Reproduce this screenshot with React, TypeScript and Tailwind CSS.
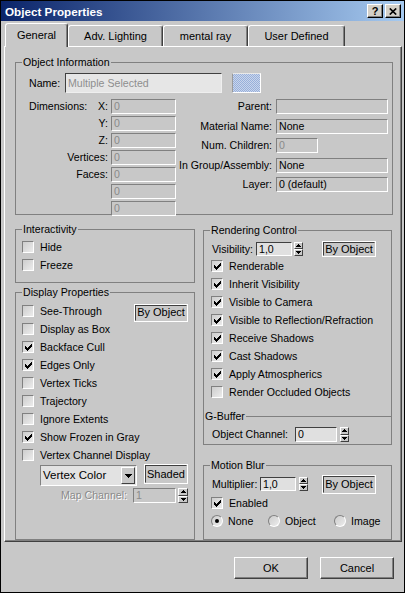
import React from "react";

type Tone = "off" | "plain" | "edit" | "name";

const tones: Record<Tone, string> = {
  off: "bg-[#c8c8c8] text-[#8a8a8a] border-t-[#808080] border-l-[#808080] border-b-white border-r-white",
  plain: "bg-[#c8c8c8] text-black border-t-[#808080] border-l-[#808080] border-b-white border-r-white",
  edit: "bg-[#e0e0e0] text-black border-t-[#404040] border-l-[#404040] border-b-white border-r-white",
  name: "bg-[#e6e6e6] text-[#8e8e8e] border-t-[#404040] border-l-[#404040] border-b-[#efefef] border-r-[#efefef]",
};

function Field({ size, value = "", tone = "off", className = "" }: { size: string; value?: string; tone?: Tone; className?: string }) {
  return (
    <div className={`flex shrink-0 items-center overflow-hidden whitespace-nowrap border pl-[2px] ${tones[tone]} ${size} ${className}`}>
      {value}
    </div>
  );
}

function CheckMark() {
  return (
    <svg width="7" height="7" viewBox="0 0 7 7" shapeRendering="crispEdges">
      <path d="M0 2h1v3H0zM1 3h1v3H1zM2 4h1v3H2zM3 3h1v3H3zM4 2h1v3H4zM5 1h1v3H5zM6 0h1v3H6z" fill="#000" />
    </svg>
  );
}

function Check({ checked }: { checked?: boolean }) {
  return (
    <span className="flex h-[12px] w-[12px] shrink-0 items-center justify-center border border-t-[#808080] border-l-[#808080] border-b-white border-r-white bg-[linear-gradient(135deg,#cdcdcd,#ececec)]">
      {checked && <CheckMark />}
    </span>
  );
}

function CheckRow({ label, checked }: { label: string; checked?: boolean }) {
  return (
    <div className="flex h-[18px] items-center whitespace-nowrap">
      <Check checked={checked} />
      <span className="ml-[6px]">{label}</span>
    </div>
  );
}

function Radio({ on }: { on?: boolean }) {
  return (
    <span className="flex h-[12px] w-[12px] shrink-0 items-center justify-center rounded-full border border-t-[#808080] border-l-[#808080] border-b-white border-r-white bg-[linear-gradient(135deg,#cdcdcd,#ececec)]">
      {on && <span className="h-[4px] w-[4px] rounded-full bg-black" />}
    </span>
  );
}

function Spinner({ size, className = "" }: { size: string; className?: string }) {
  const half =
    "flex flex-1 items-center justify-center border border-t-white border-l-white border-b-[#404040] border-r-[#404040] bg-[#c8c8c8]";
  return (
    <div className={`flex shrink-0 flex-col ${size} ${className}`}>
      <div className={half}>
        <svg width="5" height="3" viewBox="0 0 5 3" shapeRendering="crispEdges">
          <path d="M2 0h1v1h1v1h1v1H0V2h1V1h1z" fill="#000" />
        </svg>
      </div>
      <div className={half}>
        <svg width="5" height="3" viewBox="0 0 5 3" shapeRendering="crispEdges">
          <path d="M0 0h5v1H4v1H3v1H2V2H1V1H0z" fill="#000" />
        </svg>
      </div>
    </div>
  );
}

function ToggleButton({ label, size, className = "" }: { label: string; size: string; className?: string }) {
  return (
    <div className={`flex shrink-0 border border-white ${size} ${className}`}>
      <div className="flex flex-1 items-center justify-center whitespace-nowrap border border-t-[#404040] border-l-[#404040] border-b-[#c8c8c8] border-r-[#c8c8c8] text-[11px]">
        {label}
      </div>
    </div>
  );
}

function PushButton({ label }: { label: string }) {
  return (
    <div className="flex h-[22px] w-[74px] items-center justify-center border border-t-white border-l-white border-b-[#404040] border-r-[#404040] text-[11px] shadow-[inset_-1px_-1px_0_#808080]">
      {label}
    </div>
  );
}

function Group({ label, className = "", children }: { label: string; className?: string; children?: React.ReactNode }) {
  return (
    <div className={`relative shrink-0 border border-[#808080] ${className}`}>
      <span className="absolute left-[6px] top-[-7px] whitespace-nowrap bg-[#c8c8c8] px-[1px] leading-[13px]">{label}</span>
      {children}
    </div>
  );
}

function TitleButton({ children, className = "" }: { children: React.ReactNode; className?: string }) {
  return (
    <div
      className={`flex h-[14px] w-[16px] items-center justify-center border border-t-white border-l-white border-b-black border-r-black bg-[#d4d0c8] shadow-[inset_-1px_-1px_0_#808080] ${className}`}
    >
      {children}
    </div>
  );
}

function Tab({ label, size, active }: { label: string; size: string; active?: boolean }) {
  return (
    <div
      className={`flex shrink-0 items-center justify-center whitespace-nowrap rounded-t-[3px] border-l border-r border-t border-l-white border-t-white border-r-[#404040] bg-[#c8c8c8] text-[11px] shadow-[inset_-1px_0_0_#808080] ${size} ${
        active ? "relative z-10 -mb-[1px]" : ""
      }`}
    >
      {label}
    </div>
  );
}

const dimRows: [string, string][] = [
  ["Dimensions:", "X:"],
  ["", "Y:"],
  ["", "Z:"],
  ["", "Vertices:"],
  ["", "Faces:"],
  ["", ""],
  ["", ""],
];

export default function App() {
  return (
    <div className="flex h-[593px] w-[405px] select-none flex-col border border-black bg-[#c8c8c8] font-['Liberation_Sans',Arial,sans-serif] text-[10.6px] leading-[13px] text-black">
      {/* caption */}
      <div className="flex h-[20px] shrink-0 items-center bg-[linear-gradient(to_right,#0a246a,#a6caf0)] pl-[4px] pr-[3px]">
        <span className="flex-1 text-[11.7px] font-bold text-white">Object Properties</span>
        <TitleButton>
          <span className="text-[11px] font-bold leading-none">?</span>
        </TitleButton>
        <TitleButton className="ml-[2px]">
          <svg width="8" height="7" viewBox="0 0 8 7">
            <path d="M0.8 0.5L7.2 6.5M7.2 0.5L0.8 6.5" stroke="#000" strokeWidth="1.7" />
          </svg>
        </TitleButton>
      </div>

      {/* tab strip */}
      <div className="flex h-[25px] shrink-0 items-end pl-[4px]">
        <Tab label="General" size="h-[24px] w-[63px]" active />
        <Tab label="Adv. Lighting" size="h-[21px] w-[95px]" />
        <Tab label="mental ray" size="h-[21px] w-[85px]" />
        <Tab label="User Defined" size="h-[21px] w-[97px]" />
      </div>

      {/* tab page */}
      <div className="ml-[3px] h-[496px] w-[398px] shrink-0 border border-t-white border-l-white border-b-[#404040] border-r-[#404040] pl-[10px] pt-[15px] shadow-[inset_-1px_-1px_0_#808080]">
        <Group label="Object Information" className="h-[153px] w-[378px]">
          <div className="pl-[13px] pt-[10px]">
            <div className="flex h-[20px] items-center">
              <span className="w-[36px]">Name:</span>
              <Field size="h-[20px] w-[157px]" tone="name" value="Multiple Selected" />
              <div className="ml-[10px] h-[20px] w-[29px] border border-white border-l-[#9a9a9a] border-t-[#e8e8e8] bg-[image:repeating-conic-gradient(#98b0da_0_25%,#c9d5ec_0_50%)] bg-[length:2px_2px]" />
            </div>
            <div className="mt-[6px] flex">
              <div className="flex flex-col gap-[2px]">
                {dimRows.map(([a, b], i) => (
                  <div key={i} className="flex h-[15px] items-center">
                    <span className="flex w-[79px] justify-between whitespace-nowrap">
                      <span>{a}</span>
                      <span>{b}</span>
                    </span>
                    <Field size="h-[15px] w-[65px]" value="0" className="ml-[3px]" />
                  </div>
                ))}
              </div>
              <div className="flex flex-col gap-[4.5px]">
                <div className="flex h-[15px] items-center">
                  <span className="w-[96px] whitespace-nowrap text-right">Parent:</span>
                  <Field size="h-[15px] w-[112px]" tone="plain" className="ml-[4px]" />
                </div>
                <div className="flex h-[15px] items-center">
                  <span className="w-[96px] whitespace-nowrap text-right">Material Name:</span>
                  <Field size="h-[15px] w-[112px]" tone="plain" value="None" className="ml-[4px]" />
                </div>
                <div className="flex h-[15px] items-center">
                  <span className="w-[96px] whitespace-nowrap text-right">Num. Children:</span>
                  <Field size="h-[15px] w-[42px]" value="0" className="ml-[4px]" />
                </div>
                <div className="flex h-[15px] items-center">
                  <span className="flex w-[96px] justify-end whitespace-nowrap">In Group/Assembly:</span>
                  <Field size="h-[15px] w-[112px]" tone="plain" value="None" className="ml-[4px]" />
                </div>
                <div className="flex h-[15px] items-center">
                  <span className="w-[96px] whitespace-nowrap text-right">Layer:</span>
                  <Field size="h-[15px] w-[112px]" tone="plain" value="0 (default)" className="ml-[4px]" />
                </div>
              </div>
            </div>
          </div>
        </Group>

        <div className="mt-[14px] flex gap-[8px]">
          {/* left column */}
          <div className="flex flex-col gap-[9px]">
            <Group label="Interactivity" className="h-[54px] w-[180px]">
              <div className="pl-[6px] pt-[8px]">
                <CheckRow label="Hide" />
                <CheckRow label="Freeze" />
              </div>
            </Group>
            <Group label="Display Properties" className="h-[248px] w-[180px]">
              <div className="pl-[6px] pr-[6px] pt-[9px]">
                <div className="flex h-[18px] items-center justify-between">
                  <div className="flex items-center">
                    <Check />
                    <span className="ml-[6px]">See-Through</span>
                  </div>
                  <ToggleButton label="By Object" size="mt-[3px] h-[18px] w-[54px]" />
                </div>
                <CheckRow label="Display as Box" />
                <CheckRow label="Backface Cull" checked />
                <CheckRow label="Edges Only" checked />
                <CheckRow label="Vertex Ticks" />
                <CheckRow label="Trajectory" />
                <CheckRow label="Ignore Extents" />
                <CheckRow label="Show Frozen in Gray" checked />
                <CheckRow label="Vertex Channel Display" />
                <div className="ml-[18px] flex h-[22px] items-start">
                  <div className="mt-[1px] flex h-[21px] w-[97px] items-center border border-t-[#808080] border-l-[#808080] border-b-white border-r-white bg-[#e2e2e2]">
                    <span className="flex-1 whitespace-nowrap pl-[2px] text-[11.5px]">Vertex Color</span>
                    <span className="mr-[1px] flex h-[17px] w-[14px] items-center justify-center border border-t-white border-l-white border-b-[#404040] border-r-[#404040] bg-[#c8c8c8]">
                      <svg width="7" height="4" viewBox="0 0 7 4" shapeRendering="crispEdges">
                        <path d="M0 0h7v1H6v1H5v1H4v1H3V3H2V2H1V1H0z" fill="#000" />
                      </svg>
                    </span>
                  </div>
                  <ToggleButton label="Shaded" size="ml-[7px] h-[20px] w-[44px]" />
                </div>
                <div className="ml-[39px] mt-[2px] flex h-[15px] items-center">
                  <span className="w-[66px] whitespace-nowrap text-right text-[#8a8a8a] [text-shadow:1px_1px_0_#ffffff]">Map Channel:</span>
                  <Field size="h-[15px] w-[43px]" value="1" tone="off" className="ml-[6px] border-t-[#404040] border-l-[#404040]" />
                  <Spinner size="h-[15px] w-[10px]" className="ml-[2px]" />
                </div>
              </div>
            </Group>
          </div>

          {/* right column */}
          <div className="flex flex-col gap-[20px] pt-[1px]">
            <Group label="Rendering Control" className="h-[215px] w-[189px]">
              <div className="pl-[7px] pt-[10px]">
                <div className="flex h-[16px] items-center">
                  <span className="ml-[1px] w-[44px]">Visibility:</span>
                  <Field size="h-[14px] w-[36px]" tone="edit" value="1,0" />
                  <Spinner size="h-[14px] w-[9px]" className="ml-[2px]" />
                  <ToggleButton label="By Object" size="ml-[19px] h-[16px] w-[54px]" />
                </div>
                <CheckRow label="Renderable" checked />
                <CheckRow label="Inherit Visibility" checked />
                <CheckRow label="Visible to Camera" checked />
                <CheckRow label="Visible to Reflection/Refraction" checked />
                <CheckRow label="Receive Shadows" checked />
                <CheckRow label="Cast Shadows" checked />
                <CheckRow label="Apply Atmospherics" checked />
                <CheckRow label="Render Occluded Objects" />
              </div>
              <div className="relative mt-[15px] border-t border-[#808080]">
                <span className="absolute left-[0px] top-[-7px] bg-[#c8c8c8] px-[1px] leading-[13px]">G-Buffer</span>
                <div className="mt-[10px] flex h-[15px] items-center pl-[8px]">
                  <span className="w-[83px] whitespace-nowrap">Object Channel:</span>
                  <Field size="h-[15px] w-[42px]" tone="edit" value="0" />
                  <Spinner size="h-[15px] w-[9px]" className="ml-[3px]" />
                </div>
              </div>
            </Group>
            <Group label="Motion Blur" className="h-[75px] w-[189px]">
              <div className="pl-[7px] pt-[8px]">
                <div className="flex h-[20px] items-center">
                  <span className="ml-[1px] w-[48px]">Multiplier:</span>
                  <Field size="h-[14px] w-[36px]" tone="edit" value="1,0" />
                  <Spinner size="h-[14px] w-[9px]" className="ml-[3px]" />
                  <ToggleButton label="By Object" size="ml-[14px] h-[19px] w-[54px]" />
                </div>
                <CheckRow label="Enabled" checked />
                <div className="flex h-[18px] items-center">
                  <div className="flex w-[57px] items-center">
                    <Radio on />
                    <span className="ml-[5px]">None</span>
                  </div>
                  <div className="flex w-[66px] items-center">
                    <Radio />
                    <span className="ml-[5px]">Object</span>
                  </div>
                  <div className="flex items-center">
                    <Radio />
                    <span className="ml-[5px]">Image</span>
                  </div>
                </div>
              </div>
            </Group>
          </div>
        </div>
      </div>

      {/* dialog buttons */}
      <div className="flex flex-1 items-start justify-end gap-[12px] pr-[10px] pt-[15px]">
        <PushButton label="OK" />
        <PushButton label="Cancel" />
      </div>
    </div>
  );
}
